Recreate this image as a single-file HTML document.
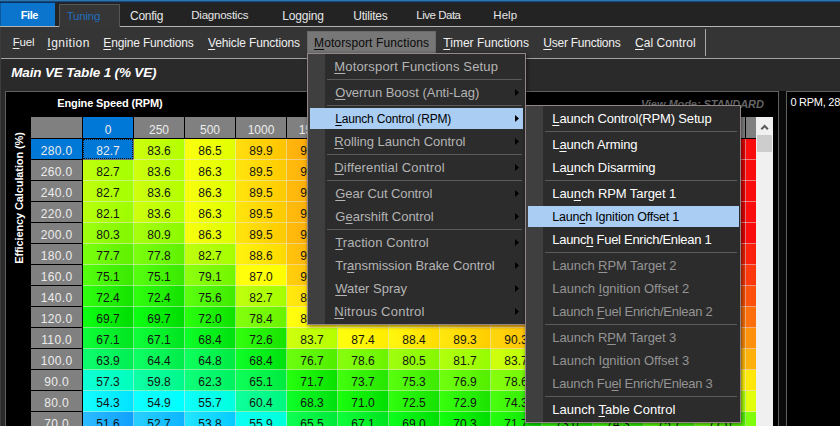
<!DOCTYPE html>
<html><head><meta charset="utf-8"><title>Main VE Table</title><style>
html,body{margin:0;padding:0;background:#2a2a2a;}
body{width:840px;height:426px;overflow:hidden;position:relative;font-family:"Liberation Sans", "DejaVu Sans", sans-serif;}
.r{position:absolute;}
.t{position:absolute;white-space:pre;display:block;}
.t u{text-decoration:underline;text-underline-offset:2px;text-decoration-thickness:1px;}
.c{position:absolute;text-align:center;font-size:12px;color:#141414;white-space:pre;}
.c.h{color:#ececec;}
.menu{position:absolute;box-sizing:border-box;background:#2c2c2c;border:1px solid #948686;box-shadow:1px 1px 4px rgba(0,0,0,0.55);}
</style></head><body>
<div class="r" style="left:0px;top:0px;width:840px;height:426px;background:#2a2a2a;"></div>
<div class="r" style="left:0px;top:0px;width:840px;height:27px;background:#232323;"></div>
<div class="r" style="left:0px;top:0px;width:840px;height:1px;background:#2a76ae;"></div>
<div class="r" style="left:0px;top:1px;width:840px;height:1px;background:#154a7a;"></div>
<div class="r" style="left:0px;top:2px;width:840px;height:1px;background:#1c2732;"></div>
<div class="r" style="left:0px;top:2px;width:56px;height:1px;background:#0a3260;"></div>
<div class="r" style="left:0px;top:27px;width:840px;height:31px;background:#353535;"></div>
<div class="r" style="left:0px;top:26px;width:840px;height:1px;background:#b4b4b4;"></div>
<div class="r" style="left:0px;top:58px;width:840px;height:1px;background:#a2a2a2;"></div>
<div class="r" style="left:1px;top:3px;width:54px;height:23px;background:#0b74cc;"></div>
<div class="r" style="left:59px;top:4px;width:61px;height:23px;background:#363636;border:1px solid #565656;border-bottom:none;box-sizing:border-box;"></div>
<div class="r" style="left:0px;top:3px;width:1px;height:23px;background:#0a5a9c;"></div>
<div class="r" style="left:0px;top:27px;width:1px;height:400px;background:#3c3c3f;"></div>
<span id="file" class="t" style="left:20.70px;top:7.0px;height:17px;line-height:17px;font-size:11px;color:#fff;font-weight:bold;font-style:normal;letter-spacing:-0.411px;">File</span>
<span id="tuning" class="t" style="left:66.70px;top:7.8px;height:17px;line-height:17px;font-size:11.5px;color:#1f6fbe;font-weight:normal;font-style:normal;letter-spacing:-0.208px;">Tuning</span>
<span id="config" class="t" style="left:130.00px;top:7.2px;height:18px;line-height:18px;font-size:12px;color:#e6e6e6;font-weight:normal;font-style:normal;letter-spacing:-0.263px;">Config</span>
<span id="diag" class="t" style="left:191.30px;top:7.4px;height:17px;line-height:17px;font-size:11.5px;color:#e6e6e6;font-weight:normal;font-style:normal;letter-spacing:-0.229px;">Diagnostics</span>
<span id="logging" class="t" style="left:282.30px;top:7.2px;height:18px;line-height:18px;font-size:12px;color:#e6e6e6;font-weight:normal;font-style:normal;letter-spacing:-0.173px;">Logging</span>
<span id="util" class="t" style="left:353.30px;top:7.2px;height:18px;line-height:18px;font-size:12px;color:#e6e6e6;font-weight:normal;font-style:normal;letter-spacing:-0.229px;">Utilites</span>
<span id="live" class="t" style="left:416.30px;top:7.4px;height:17px;line-height:17px;font-size:11.5px;color:#e6e6e6;font-weight:normal;font-style:normal;letter-spacing:-0.486px;">Live Data</span>
<span id="help" class="t" style="left:493.30px;top:7.4px;height:17px;line-height:17px;font-size:11.5px;color:#e6e6e6;font-weight:normal;font-style:normal;letter-spacing:0.048px;">Help</span>
<div class="r" style="left:307px;top:31px;width:129px;height:23px;background:#777777;border:1px solid #6a6a6a;box-sizing:border-box;"></div>
<span id="m_fuel" class="t" style="left:12.70px;top:33.8px;height:17px;line-height:17px;font-size:11.5px;color:#f0f0f0;font-weight:normal;font-style:normal;letter-spacing:-0.172px;"><u>F</u>uel</span>
<span id="m_ign" class="t" style="left:47.30px;top:33.5px;height:18px;line-height:18px;font-size:12px;color:#f0f0f0;font-weight:normal;font-style:normal;letter-spacing:0.483px;"><u>I</u>gnition</span>
<span id="m_eng" class="t" style="left:103.30px;top:33.5px;height:18px;line-height:18px;font-size:12px;color:#f0f0f0;font-weight:normal;font-style:normal;letter-spacing:-0.155px;"><u>E</u>ngine Functions</span>
<span id="m_veh" class="t" style="left:208.00px;top:33.5px;height:18px;line-height:18px;font-size:12px;color:#f0f0f0;font-weight:normal;font-style:normal;letter-spacing:-0.128px;"><u>V</u>ehicle Functions</span>
<span id="m_mot" class="t" style="left:314.00px;top:33.5px;height:18px;line-height:18px;font-size:12px;color:#0a0a0a;font-weight:normal;font-style:normal;letter-spacing:0.120px;"><u>M</u>otorsport Functions</span>
<span id="m_tim" class="t" style="left:443.30px;top:33.5px;height:18px;line-height:18px;font-size:12px;color:#f0f0f0;font-weight:normal;font-style:normal;letter-spacing:0.009px;"><u>T</u>imer Functions</span>
<span id="m_usr" class="t" style="left:543.30px;top:33.5px;height:18px;line-height:18px;font-size:12px;color:#f0f0f0;font-weight:normal;font-style:normal;letter-spacing:-0.253px;"><u>U</u>ser Functions</span>
<span id="m_cal" class="t" style="left:635.00px;top:33.5px;height:18px;line-height:18px;font-size:12px;color:#f0f0f0;font-weight:normal;font-style:normal;letter-spacing:0.064px;"><u>C</u>al Control</span>
<div class="r" style="left:705px;top:29px;width:1px;height:27px;background:#a8a8a8;"></div>
<span id="title" class="t" style="left:11.30px;top:63.0px;height:19px;line-height:19px;font-size:13.5px;color:#fff;font-weight:bold;font-style:italic;letter-spacing:-0.171px;">Main VE Table 1 (% VE)</span>
<div class="r" style="left:5px;top:91px;width:774px;height:340px;background:#000;border:1px solid #606060;box-sizing:border-box;"></div>
<div class="r" style="left:779px;top:91px;width:7px;height:340px;background:#0b0b0b;"></div>
<div class="r" style="left:786px;top:91px;width:60px;height:340px;background:#000;border:1px solid #606060;box-sizing:border-box;"></div>
<span id="rpm" class="t" style="left:790.40px;top:93.8px;height:17px;line-height:17px;font-size:11px;color:#fff;font-weight:normal;font-style:normal;letter-spacing:-0.261px;">0 RPM, 280.0</span>
<span id="espeed" class="t" style="left:57.30px;top:94.5px;height:17px;line-height:17px;font-size:11px;color:#fff;font-weight:bold;font-style:normal;letter-spacing:-0.129px;">Engine Speed (RPM)</span>
<span id="vmode" class="t" style="left:641.00px;top:96.0px;height:17px;line-height:17px;font-size:11px;color:#666666;font-weight:bold;font-style:italic;letter-spacing:-0.062px;">View Mode: STANDARD</span>
<span id="ylab" class="t" style="left:19px;top:198px;height:14px;line-height:14px;font-size:11px;font-weight:bold;color:#fff;transform:translate(-50%,-50%) rotate(-90deg);letter-spacing:-0.110px">Efficiency Calculation (%)</span>
<div id="tbl" style="position:absolute;left:0;top:0;width:757px;height:426px;overflow:hidden">
<div class="r" style="left:31px;top:117px;width:51px;height:21px;background:#808080;"></div>
<div class="r" style="left:83px;top:117px;width:50px;height:21px;background:#0078d7;"></div>
<span class="c h" style="left:83px;top:117px;width:50px;height:21px;line-height:27px">0</span>
<div class="r" style="left:134px;top:117px;width:50px;height:21px;background:#808080;"></div>
<span class="c h" style="left:134px;top:117px;width:50px;height:21px;line-height:27px">250</span>
<div class="r" style="left:185px;top:117px;width:50px;height:21px;background:#808080;"></div>
<span class="c h" style="left:185px;top:117px;width:50px;height:21px;line-height:27px">500</span>
<div class="r" style="left:236px;top:117px;width:50px;height:21px;background:#808080;"></div>
<span class="c h" style="left:236px;top:117px;width:50px;height:21px;line-height:27px">1000</span>
<div class="r" style="left:287px;top:117px;width:50px;height:21px;background:#808080;"></div>
<span class="c h" style="left:287px;top:117px;width:50px;height:21px;line-height:27px">1500</span>
<div class="r" style="left:338px;top:117px;width:50px;height:21px;background:#808080;"></div>
<span class="c h" style="left:338px;top:117px;width:50px;height:21px;line-height:27px">2000</span>
<div class="r" style="left:389px;top:117px;width:50px;height:21px;background:#808080;"></div>
<span class="c h" style="left:389px;top:117px;width:50px;height:21px;line-height:27px">2500</span>
<div class="r" style="left:440px;top:117px;width:50px;height:21px;background:#808080;"></div>
<span class="c h" style="left:440px;top:117px;width:50px;height:21px;line-height:27px">3000</span>
<div class="r" style="left:491px;top:117px;width:50px;height:21px;background:#808080;"></div>
<span class="c h" style="left:491px;top:117px;width:50px;height:21px;line-height:27px">3500</span>
<div class="r" style="left:542px;top:117px;width:50px;height:21px;background:#808080;"></div>
<span class="c h" style="left:542px;top:117px;width:50px;height:21px;line-height:27px">4000</span>
<div class="r" style="left:593px;top:117px;width:50px;height:21px;background:#808080;"></div>
<span class="c h" style="left:593px;top:117px;width:50px;height:21px;line-height:27px">4500</span>
<div class="r" style="left:644px;top:117px;width:50px;height:21px;background:#808080;"></div>
<span class="c h" style="left:644px;top:117px;width:50px;height:21px;line-height:27px">5000</span>
<div class="r" style="left:695px;top:117px;width:50px;height:21px;background:#808080;"></div>
<span class="c h" style="left:695px;top:117px;width:50px;height:21px;line-height:27px">5500</span>
<div class="r" style="left:746px;top:117px;width:50px;height:21px;background:#808080;"></div>
<span class="c h" style="left:746px;top:117px;width:50px;height:21px;line-height:27px">6000</span>
<div class="r" style="left:134px;top:139px;width:51px;height:21px;background:linear-gradient(90deg,#ceff0e,#b2ff00);"></div>
<div class="r" style="left:185px;top:139px;width:51px;height:21px;background:linear-gradient(90deg,#fcff0e,#e0ff00);"></div>
<div class="r" style="left:236px;top:139px;width:51px;height:21px;background:linear-gradient(90deg,#ffdf0e,#ffc300);"></div>
<div class="r" style="left:287px;top:139px;width:51px;height:21px;background:linear-gradient(90deg,#ffb70e,#fd9b00);"></div>
<div class="r" style="left:338px;top:139px;width:51px;height:21px;background:linear-gradient(90deg,#ffa10e,#f88500);"></div>
<div class="r" style="left:389px;top:139px;width:51px;height:21px;background:linear-gradient(90deg,#ff8a0e,#f46e00);"></div>
<div class="r" style="left:440px;top:139px;width:51px;height:21px;background:linear-gradient(90deg,#ff740e,#ef5800);"></div>
<div class="r" style="left:491px;top:139px;width:51px;height:21px;background:linear-gradient(90deg,#ff5e0e,#eb4200);"></div>
<div class="r" style="left:542px;top:139px;width:51px;height:21px;background:linear-gradient(90deg,#ff490e,#e72d00);"></div>
<div class="r" style="left:593px;top:139px;width:51px;height:21px;background:linear-gradient(90deg,#ff330e,#e21700);"></div>
<div class="r" style="left:644px;top:139px;width:51px;height:21px;background:linear-gradient(90deg,#ff1c0e,#de0000);"></div>
<div class="r" style="left:695px;top:139px;width:51px;height:21px;background:linear-gradient(90deg,#ff0e0e,#db0000);"></div>
<div class="r" style="left:746px;top:139px;width:51px;height:21px;background:linear-gradient(90deg,#ff0e0e,#db0000);"></div>
<div class="r" style="left:83px;top:160px;width:51px;height:21px;background:linear-gradient(90deg,#c0ff0e,#a4ff00);"></div>
<div class="r" style="left:134px;top:160px;width:51px;height:21px;background:linear-gradient(90deg,#ceff0e,#b2ff00);"></div>
<div class="r" style="left:185px;top:160px;width:51px;height:21px;background:linear-gradient(90deg,#f9ff0e,#ddff00);"></div>
<div class="r" style="left:236px;top:160px;width:51px;height:21px;background:linear-gradient(90deg,#ffe50e,#ffc900);"></div>
<div class="r" style="left:287px;top:160px;width:51px;height:21px;background:linear-gradient(90deg,#ffbc0e,#fea000);"></div>
<div class="r" style="left:338px;top:160px;width:51px;height:21px;background:linear-gradient(90deg,#ffa50e,#f98900);"></div>
<div class="r" style="left:389px;top:160px;width:51px;height:21px;background:linear-gradient(90deg,#ff8f0e,#f57300);"></div>
<div class="r" style="left:440px;top:160px;width:51px;height:21px;background:linear-gradient(90deg,#ff770e,#f05b00);"></div>
<div class="r" style="left:491px;top:160px;width:51px;height:21px;background:linear-gradient(90deg,#ff610e,#ec4500);"></div>
<div class="r" style="left:542px;top:160px;width:51px;height:21px;background:linear-gradient(90deg,#ff4b0e,#e72f00);"></div>
<div class="r" style="left:593px;top:160px;width:51px;height:21px;background:linear-gradient(90deg,#ff340e,#e31800);"></div>
<div class="r" style="left:644px;top:160px;width:51px;height:21px;background:linear-gradient(90deg,#ff1c0e,#de0000);"></div>
<div class="r" style="left:695px;top:160px;width:51px;height:21px;background:linear-gradient(90deg,#ff0e0e,#db0000);"></div>
<div class="r" style="left:746px;top:160px;width:51px;height:21px;background:linear-gradient(90deg,#ff0e0e,#db0000);"></div>
<div class="r" style="left:83px;top:181px;width:51px;height:21px;background:linear-gradient(90deg,#c0ff0e,#a4ff00);"></div>
<div class="r" style="left:134px;top:181px;width:51px;height:21px;background:linear-gradient(90deg,#ceff0e,#b2ff00);"></div>
<div class="r" style="left:185px;top:181px;width:51px;height:21px;background:linear-gradient(90deg,#f9ff0e,#ddff00);"></div>
<div class="r" style="left:236px;top:181px;width:51px;height:21px;background:linear-gradient(90deg,#ffe50e,#ffc900);"></div>
<div class="r" style="left:287px;top:181px;width:51px;height:21px;background:linear-gradient(90deg,#ffbc0e,#fea000);"></div>
<div class="r" style="left:338px;top:181px;width:51px;height:21px;background:linear-gradient(90deg,#ffa50e,#f98900);"></div>
<div class="r" style="left:389px;top:181px;width:51px;height:21px;background:linear-gradient(90deg,#ff8f0e,#f57300);"></div>
<div class="r" style="left:440px;top:181px;width:51px;height:21px;background:linear-gradient(90deg,#ff770e,#f05b00);"></div>
<div class="r" style="left:491px;top:181px;width:51px;height:21px;background:linear-gradient(90deg,#ff610e,#ec4500);"></div>
<div class="r" style="left:542px;top:181px;width:51px;height:21px;background:linear-gradient(90deg,#ff4b0e,#e72f00);"></div>
<div class="r" style="left:593px;top:181px;width:51px;height:21px;background:linear-gradient(90deg,#ff340e,#e31800);"></div>
<div class="r" style="left:644px;top:181px;width:51px;height:21px;background:linear-gradient(90deg,#ff1c0e,#de0000);"></div>
<div class="r" style="left:695px;top:181px;width:51px;height:21px;background:linear-gradient(90deg,#ff0e0e,#db0000);"></div>
<div class="r" style="left:746px;top:181px;width:51px;height:21px;background:linear-gradient(90deg,#ff0e0e,#db0000);"></div>
<div class="r" style="left:83px;top:202px;width:51px;height:21px;background:linear-gradient(90deg,#b8ff0e,#9cfd00);"></div>
<div class="r" style="left:134px;top:202px;width:51px;height:21px;background:linear-gradient(90deg,#ceff0e,#b2ff00);"></div>
<div class="r" style="left:185px;top:202px;width:51px;height:21px;background:linear-gradient(90deg,#f9ff0e,#ddff00);"></div>
<div class="r" style="left:236px;top:202px;width:51px;height:21px;background:linear-gradient(90deg,#ffe50e,#ffc900);"></div>
<div class="r" style="left:287px;top:202px;width:51px;height:21px;background:linear-gradient(90deg,#ffbc0e,#fea000);"></div>
<div class="r" style="left:338px;top:202px;width:51px;height:21px;background:linear-gradient(90deg,#ffa50e,#f98900);"></div>
<div class="r" style="left:389px;top:202px;width:51px;height:21px;background:linear-gradient(90deg,#ff8f0e,#f57300);"></div>
<div class="r" style="left:440px;top:202px;width:51px;height:21px;background:linear-gradient(90deg,#ff790e,#f05d00);"></div>
<div class="r" style="left:491px;top:202px;width:51px;height:21px;background:linear-gradient(90deg,#ff620e,#ec4600);"></div>
<div class="r" style="left:542px;top:202px;width:51px;height:21px;background:linear-gradient(90deg,#ff4e0e,#e83200);"></div>
<div class="r" style="left:593px;top:202px;width:51px;height:21px;background:linear-gradient(90deg,#ff370e,#e31b00);"></div>
<div class="r" style="left:644px;top:202px;width:51px;height:21px;background:linear-gradient(90deg,#ff210e,#df0500);"></div>
<div class="r" style="left:695px;top:202px;width:51px;height:21px;background:linear-gradient(90deg,#ff0e0e,#db0000);"></div>
<div class="r" style="left:746px;top:202px;width:51px;height:21px;background:linear-gradient(90deg,#ff0e0e,#db0000);"></div>
<div class="r" style="left:83px;top:223px;width:51px;height:21px;background:linear-gradient(90deg,#9eff0e,#82f800);"></div>
<div class="r" style="left:134px;top:223px;width:51px;height:21px;background:linear-gradient(90deg,#a7ff0e,#8bfa00);"></div>
<div class="r" style="left:185px;top:223px;width:51px;height:21px;background:linear-gradient(90deg,#f9ff0e,#ddff00);"></div>
<div class="r" style="left:236px;top:223px;width:51px;height:21px;background:linear-gradient(90deg,#ffe50e,#ffc900);"></div>
<div class="r" style="left:287px;top:223px;width:51px;height:21px;background:linear-gradient(90deg,#ffbc0e,#fea000);"></div>
<div class="r" style="left:338px;top:223px;width:51px;height:21px;background:linear-gradient(90deg,#ffa70e,#fa8b00);"></div>
<div class="r" style="left:389px;top:223px;width:51px;height:21px;background:linear-gradient(90deg,#ff940e,#f67800);"></div>
<div class="r" style="left:440px;top:223px;width:51px;height:21px;background:linear-gradient(90deg,#ff7f0e,#f26300);"></div>
<div class="r" style="left:491px;top:223px;width:51px;height:21px;background:linear-gradient(90deg,#ff6c0e,#ee5000);"></div>
<div class="r" style="left:542px;top:223px;width:51px;height:21px;background:linear-gradient(90deg,#ff570e,#ea3b00);"></div>
<div class="r" style="left:593px;top:223px;width:51px;height:21px;background:linear-gradient(90deg,#ff440e,#e62800);"></div>
<div class="r" style="left:644px;top:223px;width:51px;height:21px;background:linear-gradient(90deg,#ff2f0e,#e21300);"></div>
<div class="r" style="left:695px;top:223px;width:51px;height:21px;background:linear-gradient(90deg,#ff1c0e,#de0000);"></div>
<div class="r" style="left:746px;top:223px;width:51px;height:21px;background:linear-gradient(90deg,#ff0e0e,#db0000);"></div>
<div class="r" style="left:83px;top:244px;width:51px;height:21px;background:linear-gradient(90deg,#7aff0e,#5ef100);"></div>
<div class="r" style="left:134px;top:244px;width:51px;height:21px;background:linear-gradient(90deg,#7bff0e,#5ff100);"></div>
<div class="r" style="left:185px;top:244px;width:51px;height:21px;background:linear-gradient(90deg,#c0ff0e,#a4ff00);"></div>
<div class="r" style="left:236px;top:244px;width:51px;height:21px;background:linear-gradient(90deg,#fff40e,#ffd800);"></div>
<div class="r" style="left:287px;top:244px;width:51px;height:21px;background:linear-gradient(90deg,#ffc40e,#ffa800);"></div>
<div class="r" style="left:338px;top:244px;width:51px;height:21px;background:linear-gradient(90deg,#ffb20e,#fc9600);"></div>
<div class="r" style="left:389px;top:244px;width:51px;height:21px;background:linear-gradient(90deg,#ffa10e,#f88500);"></div>
<div class="r" style="left:440px;top:244px;width:51px;height:21px;background:linear-gradient(90deg,#ff8f0e,#f57300);"></div>
<div class="r" style="left:491px;top:244px;width:51px;height:21px;background:linear-gradient(90deg,#ff7e0e,#f16200);"></div>
<div class="r" style="left:542px;top:244px;width:51px;height:21px;background:linear-gradient(90deg,#ff6a0e,#ed4e00);"></div>
<div class="r" style="left:593px;top:244px;width:51px;height:21px;background:linear-gradient(90deg,#ff590e,#ea3d00);"></div>
<div class="r" style="left:644px;top:244px;width:51px;height:21px;background:linear-gradient(90deg,#ff470e,#e62b00);"></div>
<div class="r" style="left:695px;top:244px;width:51px;height:21px;background:linear-gradient(90deg,#ff360e,#e31a00);"></div>
<div class="r" style="left:746px;top:244px;width:51px;height:21px;background:linear-gradient(90deg,#ff240e,#df0800);"></div>
<div class="r" style="left:83px;top:265px;width:51px;height:21px;background:linear-gradient(90deg,#55ff0e,#39e900);"></div>
<div class="r" style="left:134px;top:265px;width:51px;height:21px;background:linear-gradient(90deg,#55ff0e,#39e900);"></div>
<div class="r" style="left:185px;top:265px;width:51px;height:21px;background:linear-gradient(90deg,#8eff0e,#72f500);"></div>
<div class="r" style="left:236px;top:265px;width:51px;height:21px;background:linear-gradient(90deg,#ffff0e,#ffff00);"></div>
<div class="r" style="left:287px;top:265px;width:51px;height:21px;background:linear-gradient(90deg,#ffd00e,#ffb400);"></div>
<div class="r" style="left:338px;top:265px;width:51px;height:21px;background:linear-gradient(90deg,#ffc10e,#ffa500);"></div>
<div class="r" style="left:389px;top:265px;width:51px;height:21px;background:linear-gradient(90deg,#ffaf0e,#fb9300);"></div>
<div class="r" style="left:440px;top:265px;width:51px;height:21px;background:linear-gradient(90deg,#ff9f0e,#f88300);"></div>
<div class="r" style="left:491px;top:265px;width:51px;height:21px;background:linear-gradient(90deg,#ff8e0e,#f47200);"></div>
<div class="r" style="left:542px;top:265px;width:51px;height:21px;background:linear-gradient(90deg,#ff7e0e,#f16200);"></div>
<div class="r" style="left:593px;top:265px;width:51px;height:21px;background:linear-gradient(90deg,#ff6c0e,#ee5000);"></div>
<div class="r" style="left:644px;top:265px;width:51px;height:21px;background:linear-gradient(90deg,#ff5c0e,#eb4000);"></div>
<div class="r" style="left:695px;top:265px;width:51px;height:21px;background:linear-gradient(90deg,#ff4b0e,#e72f00);"></div>
<div class="r" style="left:746px;top:265px;width:51px;height:21px;background:linear-gradient(90deg,#ff3b0e,#e41f00);"></div>
<div class="r" style="left:83px;top:286px;width:51px;height:21px;background:linear-gradient(90deg,#30ff0e,#14e200);"></div>
<div class="r" style="left:134px;top:286px;width:51px;height:21px;background:linear-gradient(90deg,#30ff0e,#14e200);"></div>
<div class="r" style="left:185px;top:286px;width:51px;height:21px;background:linear-gradient(90deg,#5cff0e,#40eb00);"></div>
<div class="r" style="left:236px;top:286px;width:51px;height:21px;background:linear-gradient(90deg,#c0ff0e,#a4ff00);"></div>
<div class="r" style="left:287px;top:286px;width:51px;height:21px;background:linear-gradient(90deg,#ffea0e,#ffce00);"></div>
<div class="r" style="left:338px;top:286px;width:51px;height:21px;background:linear-gradient(90deg,#ffda0e,#ffbe00);"></div>
<div class="r" style="left:389px;top:286px;width:51px;height:21px;background:linear-gradient(90deg,#ffc80e,#ffac00);"></div>
<div class="r" style="left:440px;top:286px;width:51px;height:21px;background:linear-gradient(90deg,#ffb90e,#fd9d00);"></div>
<div class="r" style="left:491px;top:286px;width:51px;height:21px;background:linear-gradient(90deg,#ffa70e,#fa8b00);"></div>
<div class="r" style="left:542px;top:286px;width:51px;height:21px;background:linear-gradient(90deg,#ff970e,#f67b00);"></div>
<div class="r" style="left:593px;top:286px;width:51px;height:21px;background:linear-gradient(90deg,#ff860e,#f36a00);"></div>
<div class="r" style="left:644px;top:286px;width:51px;height:21px;background:linear-gradient(90deg,#ff760e,#f05a00);"></div>
<div class="r" style="left:695px;top:286px;width:51px;height:21px;background:linear-gradient(90deg,#ff640e,#ec4800);"></div>
<div class="r" style="left:746px;top:286px;width:51px;height:21px;background:linear-gradient(90deg,#ff540e,#e93800);"></div>
<div class="r" style="left:83px;top:307px;width:51px;height:21px;background:linear-gradient(90deg,#0eff13,#00dc00);"></div>
<div class="r" style="left:134px;top:307px;width:51px;height:21px;background:linear-gradient(90deg,#0eff13,#00dc00);"></div>
<div class="r" style="left:185px;top:307px;width:51px;height:21px;background:linear-gradient(90deg,#2aff0e,#0ee100);"></div>
<div class="r" style="left:236px;top:307px;width:51px;height:21px;background:linear-gradient(90deg,#84ff0e,#68f300);"></div>
<div class="r" style="left:287px;top:307px;width:51px;height:21px;background:linear-gradient(90deg,#ffff0e,#ffef00);"></div>
<div class="r" style="left:338px;top:307px;width:51px;height:21px;background:linear-gradient(90deg,#fffa0e,#ffde00);"></div>
<div class="r" style="left:389px;top:307px;width:51px;height:21px;background:linear-gradient(90deg,#ffea0e,#ffce00);"></div>
<div class="r" style="left:440px;top:307px;width:51px;height:21px;background:linear-gradient(90deg,#ffd80e,#ffbc00);"></div>
<div class="r" style="left:491px;top:307px;width:51px;height:21px;background:linear-gradient(90deg,#ffc70e,#ffab00);"></div>
<div class="r" style="left:542px;top:307px;width:51px;height:21px;background:linear-gradient(90deg,#ffb70e,#fd9b00);"></div>
<div class="r" style="left:593px;top:307px;width:51px;height:21px;background:linear-gradient(90deg,#ffa50e,#f98900);"></div>
<div class="r" style="left:644px;top:307px;width:51px;height:21px;background:linear-gradient(90deg,#ff940e,#f67800);"></div>
<div class="r" style="left:695px;top:307px;width:51px;height:21px;background:linear-gradient(90deg,#ff840e,#f36800);"></div>
<div class="r" style="left:746px;top:307px;width:51px;height:21px;background:linear-gradient(90deg,#ff720e,#ef5600);"></div>
<div class="r" style="left:83px;top:328px;width:51px;height:21px;background:linear-gradient(90deg,#0eff3a,#00e41e);"></div>
<div class="r" style="left:134px;top:328px;width:51px;height:21px;background:linear-gradient(90deg,#0eff3a,#00e41e);"></div>
<div class="r" style="left:185px;top:328px;width:51px;height:21px;background:linear-gradient(90deg,#0eff28,#00e00c);"></div>
<div class="r" style="left:236px;top:328px;width:51px;height:21px;background:linear-gradient(90deg,#32ff0e,#16e200);"></div>
<div class="r" style="left:287px;top:328px;width:51px;height:21px;background:linear-gradient(90deg,#d0ff0e,#b4ff00);"></div>
<div class="r" style="left:338px;top:328px;width:51px;height:21px;background:linear-gradient(90deg,#ffff0e,#ffeb00);"></div>
<div class="r" style="left:389px;top:328px;width:51px;height:21px;background:linear-gradient(90deg,#fff70e,#ffdb00);"></div>
<div class="r" style="left:440px;top:328px;width:51px;height:21px;background:linear-gradient(90deg,#ffe80e,#ffcc00);"></div>
<div class="r" style="left:491px;top:328px;width:51px;height:21px;background:linear-gradient(90deg,#ffd80e,#ffbc00);"></div>
<div class="r" style="left:542px;top:328px;width:51px;height:21px;background:linear-gradient(90deg,#ffca0e,#ffae00);"></div>
<div class="r" style="left:593px;top:328px;width:51px;height:21px;background:linear-gradient(90deg,#ffbd0e,#fea100);"></div>
<div class="r" style="left:644px;top:328px;width:51px;height:21px;background:linear-gradient(90deg,#ffaf0e,#fb9300);"></div>
<div class="r" style="left:695px;top:328px;width:51px;height:21px;background:linear-gradient(90deg,#ffa20e,#f98600);"></div>
<div class="r" style="left:746px;top:328px;width:51px;height:21px;background:linear-gradient(90deg,#ff940e,#f67800);"></div>
<div class="r" style="left:83px;top:349px;width:51px;height:21px;background:linear-gradient(90deg,#0eff6e,#00ee52);"></div>
<div class="r" style="left:134px;top:349px;width:51px;height:21px;background:linear-gradient(90deg,#0eff65,#00ec49);"></div>
<div class="r" style="left:185px;top:349px;width:51px;height:21px;background:linear-gradient(90deg,#0eff5e,#00eb42);"></div>
<div class="r" style="left:236px;top:349px;width:51px;height:21px;background:linear-gradient(90deg,#0eff28,#00e00c);"></div>
<div class="r" style="left:287px;top:349px;width:51px;height:21px;background:linear-gradient(90deg,#6cff0e,#50ee00);"></div>
<div class="r" style="left:338px;top:349px;width:51px;height:21px;background:linear-gradient(90deg,#87ff0e,#6bf300);"></div>
<div class="r" style="left:389px;top:349px;width:51px;height:21px;background:linear-gradient(90deg,#a1ff0e,#85f800);"></div>
<div class="r" style="left:440px;top:349px;width:51px;height:21px;background:linear-gradient(90deg,#b2ff0e,#96fc00);"></div>
<div class="r" style="left:491px;top:349px;width:51px;height:21px;background:linear-gradient(90deg,#d0ff0e,#b4ff00);"></div>
<div class="r" style="left:542px;top:349px;width:51px;height:21px;background:linear-gradient(90deg,#ecff0e,#d0ff00);"></div>
<div class="r" style="left:593px;top:349px;width:51px;height:21px;background:linear-gradient(90deg,#ffff0e,#ffec00);"></div>
<div class="r" style="left:644px;top:349px;width:51px;height:21px;background:linear-gradient(90deg,#ffed0e,#ffd100);"></div>
<div class="r" style="left:695px;top:349px;width:51px;height:21px;background:linear-gradient(90deg,#ffd00e,#ffb400);"></div>
<div class="r" style="left:746px;top:349px;width:51px;height:21px;background:linear-gradient(90deg,#ffb40e,#fc9800);"></div>
<div class="r" style="left:83px;top:370px;width:51px;height:21px;background:linear-gradient(90deg,#0effd6,#00ffba);"></div>
<div class="r" style="left:134px;top:370px;width:51px;height:21px;background:linear-gradient(90deg,#0effa6,#00f98a);"></div>
<div class="r" style="left:185px;top:370px;width:51px;height:21px;background:linear-gradient(90deg,#0eff7a,#00f15e);"></div>
<div class="r" style="left:236px;top:370px;width:51px;height:21px;background:linear-gradient(90deg,#0eff59,#00ea3d);"></div>
<div class="r" style="left:287px;top:370px;width:51px;height:21px;background:linear-gradient(90deg,#26ff0e,#0ae000);"></div>
<div class="r" style="left:338px;top:370px;width:51px;height:21px;background:linear-gradient(90deg,#42ff0e,#26e500);"></div>
<div class="r" style="left:389px;top:370px;width:51px;height:21px;background:linear-gradient(90deg,#58ff0e,#3cea00);"></div>
<div class="r" style="left:440px;top:370px;width:51px;height:21px;background:linear-gradient(90deg,#6fff0e,#53ee00);"></div>
<div class="r" style="left:491px;top:370px;width:51px;height:21px;background:linear-gradient(90deg,#87ff0e,#6bf300);"></div>
<div class="r" style="left:542px;top:370px;width:51px;height:21px;background:linear-gradient(90deg,#a4ff0e,#88f900);"></div>
<div class="r" style="left:593px;top:370px;width:51px;height:21px;background:linear-gradient(90deg,#c2ff0e,#a6ff00);"></div>
<div class="r" style="left:644px;top:370px;width:51px;height:21px;background:linear-gradient(90deg,#e4ff0e,#c8ff00);"></div>
<div class="r" style="left:695px;top:370px;width:51px;height:21px;background:linear-gradient(90deg,#ffff0e,#ffef00);"></div>
<div class="r" style="left:746px;top:370px;width:51px;height:21px;background:linear-gradient(90deg,#ffea0e,#ffce00);"></div>
<div class="r" style="left:83px;top:391px;width:51px;height:21px;background:linear-gradient(90deg,#14feff,#00e2ff);"></div>
<div class="r" style="left:134px;top:391px;width:51px;height:21px;background:linear-gradient(90deg,#0effff,#00ffff);"></div>
<div class="r" style="left:185px;top:391px;width:51px;height:21px;background:linear-gradient(90deg,#0efffa,#00ffde);"></div>
<div class="r" style="left:236px;top:391px;width:51px;height:21px;background:linear-gradient(90deg,#0eff9b,#00f77f);"></div>
<div class="r" style="left:287px;top:391px;width:51px;height:21px;background:linear-gradient(90deg,#0eff29,#00e00d);"></div>
<div class="r" style="left:338px;top:391px;width:51px;height:21px;background:linear-gradient(90deg,#1cff0e,#00de00);"></div>
<div class="r" style="left:389px;top:391px;width:51px;height:21px;background:linear-gradient(90deg,#31ff0e,#15e200);"></div>
<div class="r" style="left:440px;top:391px;width:51px;height:21px;background:linear-gradient(90deg,#37ff0e,#1be300);"></div>
<div class="r" style="left:491px;top:391px;width:51px;height:21px;background:linear-gradient(90deg,#4aff0e,#2ee700);"></div>
<div class="r" style="left:542px;top:391px;width:51px;height:21px;background:linear-gradient(90deg,#69ff0e,#4ded00);"></div>
<div class="r" style="left:593px;top:391px;width:51px;height:21px;background:linear-gradient(90deg,#87ff0e,#6bf300);"></div>
<div class="r" style="left:644px;top:391px;width:51px;height:21px;background:linear-gradient(90deg,#a5ff0e,#89f900);"></div>
<div class="r" style="left:695px;top:391px;width:51px;height:21px;background:linear-gradient(90deg,#c3ff0e,#a7ff00);"></div>
<div class="r" style="left:746px;top:391px;width:51px;height:21px;background:linear-gradient(90deg,#e6ff0e,#caff00);"></div>
<div class="r" style="left:83px;top:412px;width:51px;height:21px;background:linear-gradient(90deg,#2cbcff,#10a0fe);"></div>
<div class="r" style="left:134px;top:412px;width:51px;height:21px;background:linear-gradient(90deg,#28d0ff,#0cb4ff);"></div>
<div class="r" style="left:185px;top:412px;width:51px;height:21px;background:linear-gradient(90deg,#22e6ff,#06caff);"></div>
<div class="r" style="left:236px;top:412px;width:51px;height:21px;background:linear-gradient(90deg,#0efff6,#00ffda);"></div>
<div class="r" style="left:287px;top:412px;width:51px;height:21px;background:linear-gradient(90deg,#0eff53,#00e937);"></div>
<div class="r" style="left:338px;top:412px;width:51px;height:21px;background:linear-gradient(90deg,#0eff3a,#00e41e);"></div>
<div class="r" style="left:389px;top:412px;width:51px;height:21px;background:linear-gradient(90deg,#0eff1e,#00de02);"></div>
<div class="r" style="left:440px;top:412px;width:51px;height:21px;background:linear-gradient(90deg,#12ff0e,#00dc00);"></div>
<div class="r" style="left:491px;top:412px;width:51px;height:21px;background:linear-gradient(90deg,#26ff0e,#0ae000);"></div>
<div class="r" style="left:542px;top:412px;width:51px;height:21px;background:linear-gradient(90deg,#38ff0e,#1ce300);"></div>
<div class="r" style="left:593px;top:412px;width:51px;height:21px;background:linear-gradient(90deg,#4aff0e,#2ee700);"></div>
<div class="r" style="left:644px;top:412px;width:51px;height:21px;background:linear-gradient(90deg,#5eff0e,#42eb00);"></div>
<div class="r" style="left:695px;top:412px;width:51px;height:21px;background:linear-gradient(90deg,#70ff0e,#54ef00);"></div>
<div class="r" style="left:746px;top:412px;width:51px;height:21px;background:linear-gradient(90deg,#82ff0e,#66f200);"></div>
<div class="r" style="left:83px;top:139px;width:714px;height:294px;background:linear-gradient(to right,transparent 50px,rgba(232,232,232,0.5) 50px) 0 0/51px 100%,linear-gradient(to bottom,transparent 20px,rgba(232,232,232,0.5) 20px) 0 0/100% 21px;"></div>
<div class="r" style="left:31px;top:139px;width:51px;height:20px;background:#0078d7;"></div>
<span class="c h" style="left:31px;top:139px;width:51px;height:20px;line-height:24px;letter-spacing:0.35px;text-indent:0.35px">280.0</span>
<div class="r" style="left:83px;top:139px;width:50px;height:20px;background:#0078d7;outline:1px dotted #111;outline-offset:-1px;"></div>
<span class="c h" style="left:83px;top:139px;width:50px;height:20px;line-height:24px">82.7</span>
<span class="c" style="left:134px;top:139px;width:50px;height:20px;line-height:24px">83.6</span>
<span class="c" style="left:185px;top:139px;width:50px;height:20px;line-height:24px">86.5</span>
<span class="c" style="left:236px;top:139px;width:50px;height:20px;line-height:24px">89.9</span>
<span class="c" style="left:287px;top:139px;width:50px;height:20px;line-height:24px">92.4</span>
<span class="c" style="left:338px;top:139px;width:50px;height:20px;line-height:24px">93.8</span>
<span class="c" style="left:389px;top:139px;width:50px;height:20px;line-height:24px">95.2</span>
<span class="c" style="left:440px;top:139px;width:50px;height:20px;line-height:24px">96.6</span>
<span class="c" style="left:491px;top:139px;width:50px;height:20px;line-height:24px">98.0</span>
<span class="c" style="left:542px;top:139px;width:50px;height:20px;line-height:24px">99.3</span>
<span class="c" style="left:593px;top:139px;width:50px;height:20px;line-height:24px">100.7</span>
<span class="c" style="left:644px;top:139px;width:50px;height:20px;line-height:24px">102.1</span>
<span class="c" style="left:695px;top:139px;width:50px;height:20px;line-height:24px">103.5</span>
<span class="c" style="left:746px;top:139px;width:50px;height:20px;line-height:24px">104.9</span>
<div class="r" style="left:31px;top:160px;width:51px;height:20px;background:#808080;"></div>
<span class="c h" style="left:31px;top:160px;width:51px;height:20px;line-height:24px;letter-spacing:0.35px;text-indent:0.35px">260.0</span>
<span class="c" style="left:83px;top:160px;width:50px;height:20px;line-height:24px">82.7</span>
<span class="c" style="left:134px;top:160px;width:50px;height:20px;line-height:24px">83.6</span>
<span class="c" style="left:185px;top:160px;width:50px;height:20px;line-height:24px">86.3</span>
<span class="c" style="left:236px;top:160px;width:50px;height:20px;line-height:24px">89.5</span>
<span class="c" style="left:287px;top:160px;width:50px;height:20px;line-height:24px">92.1</span>
<span class="c" style="left:338px;top:160px;width:50px;height:20px;line-height:24px">93.5</span>
<span class="c" style="left:389px;top:160px;width:50px;height:20px;line-height:24px">94.9</span>
<span class="c" style="left:440px;top:160px;width:50px;height:20px;line-height:24px">96.4</span>
<span class="c" style="left:491px;top:160px;width:50px;height:20px;line-height:24px">97.8</span>
<span class="c" style="left:542px;top:160px;width:50px;height:20px;line-height:24px">99.2</span>
<span class="c" style="left:593px;top:160px;width:50px;height:20px;line-height:24px">100.6</span>
<span class="c" style="left:644px;top:160px;width:50px;height:20px;line-height:24px">102.1</span>
<span class="c" style="left:695px;top:160px;width:50px;height:20px;line-height:24px">103.5</span>
<span class="c" style="left:746px;top:160px;width:50px;height:20px;line-height:24px">104.9</span>
<div class="r" style="left:31px;top:181px;width:51px;height:20px;background:#808080;"></div>
<span class="c h" style="left:31px;top:181px;width:51px;height:20px;line-height:24px;letter-spacing:0.35px;text-indent:0.35px">240.0</span>
<span class="c" style="left:83px;top:181px;width:50px;height:20px;line-height:24px">82.7</span>
<span class="c" style="left:134px;top:181px;width:50px;height:20px;line-height:24px">83.6</span>
<span class="c" style="left:185px;top:181px;width:50px;height:20px;line-height:24px">86.3</span>
<span class="c" style="left:236px;top:181px;width:50px;height:20px;line-height:24px">89.5</span>
<span class="c" style="left:287px;top:181px;width:50px;height:20px;line-height:24px">92.1</span>
<span class="c" style="left:338px;top:181px;width:50px;height:20px;line-height:24px">93.5</span>
<span class="c" style="left:389px;top:181px;width:50px;height:20px;line-height:24px">94.9</span>
<span class="c" style="left:440px;top:181px;width:50px;height:20px;line-height:24px">96.4</span>
<span class="c" style="left:491px;top:181px;width:50px;height:20px;line-height:24px">97.8</span>
<span class="c" style="left:542px;top:181px;width:50px;height:20px;line-height:24px">99.2</span>
<span class="c" style="left:593px;top:181px;width:50px;height:20px;line-height:24px">100.6</span>
<span class="c" style="left:644px;top:181px;width:50px;height:20px;line-height:24px">102.1</span>
<span class="c" style="left:695px;top:181px;width:50px;height:20px;line-height:24px">103.5</span>
<span class="c" style="left:746px;top:181px;width:50px;height:20px;line-height:24px">104.9</span>
<div class="r" style="left:31px;top:202px;width:51px;height:20px;background:#808080;"></div>
<span class="c h" style="left:31px;top:202px;width:51px;height:20px;line-height:24px;letter-spacing:0.35px;text-indent:0.35px">220.0</span>
<span class="c" style="left:83px;top:202px;width:50px;height:20px;line-height:24px">82.1</span>
<span class="c" style="left:134px;top:202px;width:50px;height:20px;line-height:24px">83.6</span>
<span class="c" style="left:185px;top:202px;width:50px;height:20px;line-height:24px">86.3</span>
<span class="c" style="left:236px;top:202px;width:50px;height:20px;line-height:24px">89.5</span>
<span class="c" style="left:287px;top:202px;width:50px;height:20px;line-height:24px">92.1</span>
<span class="c" style="left:338px;top:202px;width:50px;height:20px;line-height:24px">93.5</span>
<span class="c" style="left:389px;top:202px;width:50px;height:20px;line-height:24px">94.9</span>
<span class="c" style="left:440px;top:202px;width:50px;height:20px;line-height:24px">96.3</span>
<span class="c" style="left:491px;top:202px;width:50px;height:20px;line-height:24px">97.7</span>
<span class="c" style="left:542px;top:202px;width:50px;height:20px;line-height:24px">99.0</span>
<span class="c" style="left:593px;top:202px;width:50px;height:20px;line-height:24px">100.4</span>
<span class="c" style="left:644px;top:202px;width:50px;height:20px;line-height:24px">101.8</span>
<span class="c" style="left:695px;top:202px;width:50px;height:20px;line-height:24px">103.2</span>
<span class="c" style="left:746px;top:202px;width:50px;height:20px;line-height:24px">104.6</span>
<div class="r" style="left:31px;top:223px;width:51px;height:20px;background:#808080;"></div>
<span class="c h" style="left:31px;top:223px;width:51px;height:20px;line-height:24px;letter-spacing:0.35px;text-indent:0.35px">200.0</span>
<span class="c" style="left:83px;top:223px;width:50px;height:20px;line-height:24px">80.3</span>
<span class="c" style="left:134px;top:223px;width:50px;height:20px;line-height:24px">80.9</span>
<span class="c" style="left:185px;top:223px;width:50px;height:20px;line-height:24px">86.3</span>
<span class="c" style="left:236px;top:223px;width:50px;height:20px;line-height:24px">89.5</span>
<span class="c" style="left:287px;top:223px;width:50px;height:20px;line-height:24px">92.1</span>
<span class="c" style="left:338px;top:223px;width:50px;height:20px;line-height:24px">93.4</span>
<span class="c" style="left:389px;top:223px;width:50px;height:20px;line-height:24px">94.6</span>
<span class="c" style="left:440px;top:223px;width:50px;height:20px;line-height:24px">95.9</span>
<span class="c" style="left:491px;top:223px;width:50px;height:20px;line-height:24px">97.1</span>
<span class="c" style="left:542px;top:223px;width:50px;height:20px;line-height:24px">98.4</span>
<span class="c" style="left:593px;top:223px;width:50px;height:20px;line-height:24px">99.6</span>
<span class="c" style="left:644px;top:223px;width:50px;height:20px;line-height:24px">100.9</span>
<span class="c" style="left:695px;top:223px;width:50px;height:20px;line-height:24px">102.1</span>
<span class="c" style="left:746px;top:223px;width:50px;height:20px;line-height:24px">103.4</span>
<div class="r" style="left:31px;top:244px;width:51px;height:20px;background:#808080;"></div>
<span class="c h" style="left:31px;top:244px;width:51px;height:20px;line-height:24px;letter-spacing:0.35px;text-indent:0.35px">180.0</span>
<span class="c" style="left:83px;top:244px;width:50px;height:20px;line-height:24px">77.7</span>
<span class="c" style="left:134px;top:244px;width:50px;height:20px;line-height:24px">77.8</span>
<span class="c" style="left:185px;top:244px;width:50px;height:20px;line-height:24px">82.7</span>
<span class="c" style="left:236px;top:244px;width:50px;height:20px;line-height:24px">88.6</span>
<span class="c" style="left:287px;top:244px;width:50px;height:20px;line-height:24px">91.6</span>
<span class="c" style="left:338px;top:244px;width:50px;height:20px;line-height:24px">92.7</span>
<span class="c" style="left:389px;top:244px;width:50px;height:20px;line-height:24px">93.8</span>
<span class="c" style="left:440px;top:244px;width:50px;height:20px;line-height:24px">94.9</span>
<span class="c" style="left:491px;top:244px;width:50px;height:20px;line-height:24px">96.0</span>
<span class="c" style="left:542px;top:244px;width:50px;height:20px;line-height:24px">97.2</span>
<span class="c" style="left:593px;top:244px;width:50px;height:20px;line-height:24px">98.3</span>
<span class="c" style="left:644px;top:244px;width:50px;height:20px;line-height:24px">99.4</span>
<span class="c" style="left:695px;top:244px;width:50px;height:20px;line-height:24px">100.5</span>
<span class="c" style="left:746px;top:244px;width:50px;height:20px;line-height:24px">101.6</span>
<div class="r" style="left:31px;top:265px;width:51px;height:20px;background:#808080;"></div>
<span class="c h" style="left:31px;top:265px;width:51px;height:20px;line-height:24px;letter-spacing:0.35px;text-indent:0.35px">160.0</span>
<span class="c" style="left:83px;top:265px;width:50px;height:20px;line-height:24px">75.1</span>
<span class="c" style="left:134px;top:265px;width:50px;height:20px;line-height:24px">75.1</span>
<span class="c" style="left:185px;top:265px;width:50px;height:20px;line-height:24px">79.1</span>
<span class="c" style="left:236px;top:265px;width:50px;height:20px;line-height:24px">87.0</span>
<span class="c" style="left:287px;top:265px;width:50px;height:20px;line-height:24px">90.8</span>
<span class="c" style="left:338px;top:265px;width:50px;height:20px;line-height:24px">91.8</span>
<span class="c" style="left:389px;top:265px;width:50px;height:20px;line-height:24px">92.9</span>
<span class="c" style="left:440px;top:265px;width:50px;height:20px;line-height:24px">93.9</span>
<span class="c" style="left:491px;top:265px;width:50px;height:20px;line-height:24px">95.0</span>
<span class="c" style="left:542px;top:265px;width:50px;height:20px;line-height:24px">96.0</span>
<span class="c" style="left:593px;top:265px;width:50px;height:20px;line-height:24px">97.1</span>
<span class="c" style="left:644px;top:265px;width:50px;height:20px;line-height:24px">98.1</span>
<span class="c" style="left:695px;top:265px;width:50px;height:20px;line-height:24px">99.2</span>
<span class="c" style="left:746px;top:265px;width:50px;height:20px;line-height:24px">100.2</span>
<div class="r" style="left:31px;top:286px;width:51px;height:20px;background:#808080;"></div>
<span class="c h" style="left:31px;top:286px;width:51px;height:20px;line-height:24px;letter-spacing:0.35px;text-indent:0.35px">140.0</span>
<span class="c" style="left:83px;top:286px;width:50px;height:20px;line-height:24px">72.4</span>
<span class="c" style="left:134px;top:286px;width:50px;height:20px;line-height:24px">72.4</span>
<span class="c" style="left:185px;top:286px;width:50px;height:20px;line-height:24px">75.6</span>
<span class="c" style="left:236px;top:286px;width:50px;height:20px;line-height:24px">82.7</span>
<span class="c" style="left:287px;top:286px;width:50px;height:20px;line-height:24px">89.2</span>
<span class="c" style="left:338px;top:286px;width:50px;height:20px;line-height:24px">90.2</span>
<span class="c" style="left:389px;top:286px;width:50px;height:20px;line-height:24px">91.3</span>
<span class="c" style="left:440px;top:286px;width:50px;height:20px;line-height:24px">92.3</span>
<span class="c" style="left:491px;top:286px;width:50px;height:20px;line-height:24px">93.4</span>
<span class="c" style="left:542px;top:286px;width:50px;height:20px;line-height:24px">94.4</span>
<span class="c" style="left:593px;top:286px;width:50px;height:20px;line-height:24px">95.5</span>
<span class="c" style="left:644px;top:286px;width:50px;height:20px;line-height:24px">96.5</span>
<span class="c" style="left:695px;top:286px;width:50px;height:20px;line-height:24px">97.6</span>
<span class="c" style="left:746px;top:286px;width:50px;height:20px;line-height:24px">98.6</span>
<div class="r" style="left:31px;top:307px;width:51px;height:20px;background:#808080;"></div>
<span class="c h" style="left:31px;top:307px;width:51px;height:20px;line-height:24px;letter-spacing:0.35px;text-indent:0.35px">120.0</span>
<span class="c" style="left:83px;top:307px;width:50px;height:20px;line-height:24px">69.7</span>
<span class="c" style="left:134px;top:307px;width:50px;height:20px;line-height:24px">69.7</span>
<span class="c" style="left:185px;top:307px;width:50px;height:20px;line-height:24px">72.0</span>
<span class="c" style="left:236px;top:307px;width:50px;height:20px;line-height:24px">78.4</span>
<span class="c" style="left:287px;top:307px;width:50px;height:20px;line-height:24px">87.1</span>
<span class="c" style="left:338px;top:307px;width:50px;height:20px;line-height:24px">88.2</span>
<span class="c" style="left:389px;top:307px;width:50px;height:20px;line-height:24px">89.2</span>
<span class="c" style="left:440px;top:307px;width:50px;height:20px;line-height:24px">90.3</span>
<span class="c" style="left:491px;top:307px;width:50px;height:20px;line-height:24px">91.4</span>
<span class="c" style="left:542px;top:307px;width:50px;height:20px;line-height:24px">92.4</span>
<span class="c" style="left:593px;top:307px;width:50px;height:20px;line-height:24px">93.5</span>
<span class="c" style="left:644px;top:307px;width:50px;height:20px;line-height:24px">94.6</span>
<span class="c" style="left:695px;top:307px;width:50px;height:20px;line-height:24px">95.6</span>
<span class="c" style="left:746px;top:307px;width:50px;height:20px;line-height:24px">96.7</span>
<div class="r" style="left:31px;top:328px;width:51px;height:20px;background:#808080;"></div>
<span class="c h" style="left:31px;top:328px;width:51px;height:20px;line-height:24px;letter-spacing:0.35px;text-indent:0.35px">110.0</span>
<span class="c" style="left:83px;top:328px;width:50px;height:20px;line-height:24px">67.1</span>
<span class="c" style="left:134px;top:328px;width:50px;height:20px;line-height:24px">67.1</span>
<span class="c" style="left:185px;top:328px;width:50px;height:20px;line-height:24px">68.4</span>
<span class="c" style="left:236px;top:328px;width:50px;height:20px;line-height:24px">72.6</span>
<span class="c" style="left:287px;top:328px;width:50px;height:20px;line-height:24px">83.7</span>
<span class="c" style="left:338px;top:328px;width:50px;height:20px;line-height:24px">87.4</span>
<span class="c" style="left:389px;top:328px;width:50px;height:20px;line-height:24px">88.4</span>
<span class="c" style="left:440px;top:328px;width:50px;height:20px;line-height:24px">89.3</span>
<span class="c" style="left:491px;top:328px;width:50px;height:20px;line-height:24px">90.3</span>
<span class="c" style="left:542px;top:328px;width:50px;height:20px;line-height:24px">91.2</span>
<span class="c" style="left:593px;top:328px;width:50px;height:20px;line-height:24px">92.0</span>
<span class="c" style="left:644px;top:328px;width:50px;height:20px;line-height:24px">92.9</span>
<span class="c" style="left:695px;top:328px;width:50px;height:20px;line-height:24px">93.7</span>
<span class="c" style="left:746px;top:328px;width:50px;height:20px;line-height:24px">94.6</span>
<div class="r" style="left:31px;top:349px;width:51px;height:20px;background:#808080;"></div>
<span class="c h" style="left:31px;top:349px;width:51px;height:20px;line-height:24px;letter-spacing:0.35px;text-indent:0.35px">100.0</span>
<span class="c" style="left:83px;top:349px;width:50px;height:20px;line-height:24px">63.9</span>
<span class="c" style="left:134px;top:349px;width:50px;height:20px;line-height:24px">64.4</span>
<span class="c" style="left:185px;top:349px;width:50px;height:20px;line-height:24px">64.8</span>
<span class="c" style="left:236px;top:349px;width:50px;height:20px;line-height:24px">68.4</span>
<span class="c" style="left:287px;top:349px;width:50px;height:20px;line-height:24px">76.7</span>
<span class="c" style="left:338px;top:349px;width:50px;height:20px;line-height:24px">78.6</span>
<span class="c" style="left:389px;top:349px;width:50px;height:20px;line-height:24px">80.5</span>
<span class="c" style="left:440px;top:349px;width:50px;height:20px;line-height:24px">81.7</span>
<span class="c" style="left:491px;top:349px;width:50px;height:20px;line-height:24px">83.7</span>
<span class="c" style="left:542px;top:349px;width:50px;height:20px;line-height:24px">85.5</span>
<span class="c" style="left:593px;top:349px;width:50px;height:20px;line-height:24px">87.3</span>
<span class="c" style="left:644px;top:349px;width:50px;height:20px;line-height:24px">89.0</span>
<span class="c" style="left:695px;top:349px;width:50px;height:20px;line-height:24px">90.8</span>
<span class="c" style="left:746px;top:349px;width:50px;height:20px;line-height:24px">92.6</span>
<div class="r" style="left:31px;top:370px;width:51px;height:20px;background:#808080;"></div>
<span class="c h" style="left:31px;top:370px;width:51px;height:20px;line-height:24px;letter-spacing:0.35px;text-indent:0.35px">90.0</span>
<span class="c" style="left:83px;top:370px;width:50px;height:20px;line-height:24px">57.3</span>
<span class="c" style="left:134px;top:370px;width:50px;height:20px;line-height:24px">59.8</span>
<span class="c" style="left:185px;top:370px;width:50px;height:20px;line-height:24px">62.3</span>
<span class="c" style="left:236px;top:370px;width:50px;height:20px;line-height:24px">65.1</span>
<span class="c" style="left:287px;top:370px;width:50px;height:20px;line-height:24px">71.7</span>
<span class="c" style="left:338px;top:370px;width:50px;height:20px;line-height:24px">73.7</span>
<span class="c" style="left:389px;top:370px;width:50px;height:20px;line-height:24px">75.3</span>
<span class="c" style="left:440px;top:370px;width:50px;height:20px;line-height:24px">76.9</span>
<span class="c" style="left:491px;top:370px;width:50px;height:20px;line-height:24px">78.6</span>
<span class="c" style="left:542px;top:370px;width:50px;height:20px;line-height:24px">80.7</span>
<span class="c" style="left:593px;top:370px;width:50px;height:20px;line-height:24px">82.8</span>
<span class="c" style="left:644px;top:370px;width:50px;height:20px;line-height:24px">85.0</span>
<span class="c" style="left:695px;top:370px;width:50px;height:20px;line-height:24px">87.1</span>
<span class="c" style="left:746px;top:370px;width:50px;height:20px;line-height:24px">89.2</span>
<div class="r" style="left:31px;top:391px;width:51px;height:20px;background:#808080;"></div>
<span class="c h" style="left:31px;top:391px;width:51px;height:20px;line-height:24px;letter-spacing:0.35px;text-indent:0.35px">80.0</span>
<span class="c" style="left:83px;top:391px;width:50px;height:20px;line-height:24px">54.3</span>
<span class="c" style="left:134px;top:391px;width:50px;height:20px;line-height:24px">54.9</span>
<span class="c" style="left:185px;top:391px;width:50px;height:20px;line-height:24px">55.7</span>
<span class="c" style="left:236px;top:391px;width:50px;height:20px;line-height:24px">60.4</span>
<span class="c" style="left:287px;top:391px;width:50px;height:20px;line-height:24px">68.3</span>
<span class="c" style="left:338px;top:391px;width:50px;height:20px;line-height:24px">71.0</span>
<span class="c" style="left:389px;top:391px;width:50px;height:20px;line-height:24px">72.5</span>
<span class="c" style="left:440px;top:391px;width:50px;height:20px;line-height:24px">72.9</span>
<span class="c" style="left:491px;top:391px;width:50px;height:20px;line-height:24px">74.3</span>
<span class="c" style="left:542px;top:391px;width:50px;height:20px;line-height:24px">76.5</span>
<span class="c" style="left:593px;top:391px;width:50px;height:20px;line-height:24px">78.6</span>
<span class="c" style="left:644px;top:391px;width:50px;height:20px;line-height:24px">80.8</span>
<span class="c" style="left:695px;top:391px;width:50px;height:20px;line-height:24px">82.9</span>
<span class="c" style="left:746px;top:391px;width:50px;height:20px;line-height:24px">85.1</span>
<div class="r" style="left:31px;top:412px;width:51px;height:20px;background:#808080;"></div>
<span class="c h" style="left:31px;top:412px;width:51px;height:20px;line-height:24px;letter-spacing:0.35px;text-indent:0.35px">70.0</span>
<span class="c" style="left:83px;top:412px;width:50px;height:20px;line-height:24px">51.6</span>
<span class="c" style="left:134px;top:412px;width:50px;height:20px;line-height:24px">52.7</span>
<span class="c" style="left:185px;top:412px;width:50px;height:20px;line-height:24px">53.8</span>
<span class="c" style="left:236px;top:412px;width:50px;height:20px;line-height:24px">55.9</span>
<span class="c" style="left:287px;top:412px;width:50px;height:20px;line-height:24px">65.5</span>
<span class="c" style="left:338px;top:412px;width:50px;height:20px;line-height:24px">67.1</span>
<span class="c" style="left:389px;top:412px;width:50px;height:20px;line-height:24px">69.0</span>
<span class="c" style="left:440px;top:412px;width:50px;height:20px;line-height:24px">70.3</span>
<span class="c" style="left:491px;top:412px;width:50px;height:20px;line-height:24px">71.7</span>
<span class="c" style="left:542px;top:412px;width:50px;height:20px;line-height:24px">73.0</span>
<span class="c" style="left:593px;top:412px;width:50px;height:20px;line-height:24px">74.3</span>
<span class="c" style="left:644px;top:412px;width:50px;height:20px;line-height:24px">75.7</span>
<span class="c" style="left:695px;top:412px;width:50px;height:20px;line-height:24px">77.0</span>
<span class="c" style="left:746px;top:412px;width:50px;height:20px;line-height:24px">78.3</span>
</div>
<div class="r" style="left:756px;top:117px;width:17px;height:320px;background:#f0f0f0;"></div>
<div class="r" style="left:757px;top:135px;width:15px;height:17px;background:#cdcdcd;"></div>
<svg style="position:absolute;left:759px;top:121px" width="11" height="11" viewBox="0 0 11 11"><path d="M2.3 8.3 L5.6 5 L8.9 8.3" fill="none" stroke="#5a5a5a" stroke-width="2"/></svg>
<div class="menu" id="menu1" style="left:307px;top:53px;width:219px;height:272px"></div>
<div class="r" style="left:308px;top:54px;width:17px;height:270px;background:#3f3f3f;"></div>
<span id="a1" class="t" style="left:334.30px;top:57.1px;height:19px;line-height:19px;font-size:13px;color:#b4b4b4;font-weight:normal;font-style:normal;letter-spacing:0.158px;"><u>M</u>otorsport Functions Setup</span>
<div class="r" style="left:327px;top:79px;width:195px;height:1px;background:#5a5a5a;"></div>
<span id="a2" class="t" style="left:335.30px;top:83.1px;height:19px;line-height:19px;font-size:13px;color:#b4b4b4;font-weight:normal;font-style:normal;letter-spacing:-0.021px;"><u>O</u>verrun Boost (Anti-Lag)</span>
<svg style="position:absolute;left:515px;top:89px" width="4" height="7" viewBox="0 0 4 7"><path d="M0 0 L4 3.5 L0 7 Z" fill="#000"/></svg>
<div class="r" style="left:327px;top:105px;width:195px;height:1px;background:#5a5a5a;"></div>
<div class="r" style="left:310px;top:108px;width:213px;height:21px;background:#a9cdf3;"></div>
<span id="a3" class="t" style="left:335.30px;top:109.8px;height:18px;line-height:18px;font-size:12px;color:#000000;font-weight:normal;font-style:normal;letter-spacing:-0.178px;"><u>L</u>aunch Control (RPM)</span>
<svg style="position:absolute;left:515px;top:115px" width="4" height="7" viewBox="0 0 4 7"><path d="M0 0 L4 3.5 L0 7 Z" fill="#000"/></svg>
<span id="a4" class="t" style="left:334.30px;top:132.1px;height:19px;line-height:19px;font-size:13px;color:#b4b4b4;font-weight:normal;font-style:normal;letter-spacing:-0.016px;"><u>R</u>olling Launch Control</span>
<svg style="position:absolute;left:515px;top:138px" width="4" height="7" viewBox="0 0 4 7"><path d="M0 0 L4 3.5 L0 7 Z" fill="#000"/></svg>
<div class="r" style="left:327px;top:154px;width:195px;height:1px;background:#5a5a5a;"></div>
<span id="a5" class="t" style="left:334.30px;top:158.1px;height:19px;line-height:19px;font-size:13px;color:#b4b4b4;font-weight:normal;font-style:normal;letter-spacing:0.151px;"><u>D</u>ifferential Control</span>
<svg style="position:absolute;left:515px;top:164px" width="4" height="7" viewBox="0 0 4 7"><path d="M0 0 L4 3.5 L0 7 Z" fill="#000"/></svg>
<div class="r" style="left:327px;top:180px;width:195px;height:1px;background:#5a5a5a;"></div>
<span id="a6" class="t" style="left:335.30px;top:184.1px;height:19px;line-height:19px;font-size:13px;color:#b4b4b4;font-weight:normal;font-style:normal;letter-spacing:-0.078px;"><u>G</u>ear Cut Control</span>
<svg style="position:absolute;left:515px;top:190px" width="4" height="7" viewBox="0 0 4 7"><path d="M0 0 L4 3.5 L0 7 Z" fill="#000"/></svg>
<span id="a7" class="t" style="left:335.30px;top:207.1px;height:19px;line-height:19px;font-size:13px;color:#b4b4b4;font-weight:normal;font-style:normal;letter-spacing:0.008px;">G<u>e</u>arshift Control</span>
<svg style="position:absolute;left:515px;top:213px" width="4" height="7" viewBox="0 0 4 7"><path d="M0 0 L4 3.5 L0 7 Z" fill="#000"/></svg>
<div class="r" style="left:327px;top:229px;width:195px;height:1px;background:#5a5a5a;"></div>
<span id="a8" class="t" style="left:335.30px;top:233.1px;height:19px;line-height:19px;font-size:13px;color:#b4b4b4;font-weight:normal;font-style:normal;letter-spacing:0.086px;"><u>T</u>raction Control</span>
<svg style="position:absolute;left:515px;top:239px" width="4" height="7" viewBox="0 0 4 7"><path d="M0 0 L4 3.5 L0 7 Z" fill="#000"/></svg>
<span id="a9" class="t" style="left:335.30px;top:256.1px;height:19px;line-height:19px;font-size:13px;color:#b4b4b4;font-weight:normal;font-style:normal;letter-spacing:-0.021px;">Tr<u>a</u>nsmission Brake Control</span>
<svg style="position:absolute;left:515px;top:262px" width="4" height="7" viewBox="0 0 4 7"><path d="M0 0 L4 3.5 L0 7 Z" fill="#000"/></svg>
<span id="a10" class="t" style="left:335.30px;top:279.1px;height:19px;line-height:19px;font-size:13px;color:#b4b4b4;font-weight:normal;font-style:normal;letter-spacing:-0.016px;"><u>W</u>ater Spray</span>
<svg style="position:absolute;left:515px;top:285px" width="4" height="7" viewBox="0 0 4 7"><path d="M0 0 L4 3.5 L0 7 Z" fill="#000"/></svg>
<span id="a11" class="t" style="left:334.30px;top:302.1px;height:19px;line-height:19px;font-size:13px;color:#b4b4b4;font-weight:normal;font-style:normal;letter-spacing:0.249px;"><u>N</u>itrous Control</span>
<svg style="position:absolute;left:515px;top:308px" width="4" height="7" viewBox="0 0 4 7"><path d="M0 0 L4 3.5 L0 7 Z" fill="#000"/></svg>
<div class="menu" id="menu2" style="left:525px;top:105px;width:216px;height:318px"></div>
<div class="r" style="left:526px;top:106px;width:17px;height:316px;background:#3f3f3f;"></div>
<span id="b1" class="t" style="left:552.30px;top:109.1px;height:19px;line-height:19px;font-size:13px;color:#ffffff;font-weight:normal;font-style:normal;letter-spacing:-0.165px;"><u>L</u>aunch Control(RPM) Setup</span>
<div class="r" style="left:545px;top:131px;width:192px;height:1px;background:#5a5a5a;"></div>
<span id="b2" class="t" style="left:552.30px;top:135.1px;height:19px;line-height:19px;font-size:13px;color:#ffffff;font-weight:normal;font-style:normal;letter-spacing:-0.126px;">L<u>a</u>unch Arming</span>
<span id="b3" class="t" style="left:552.30px;top:158.1px;height:19px;line-height:19px;font-size:13px;color:#ffffff;font-weight:normal;font-style:normal;letter-spacing:-0.103px;">La<u>u</u>nch Disarming</span>
<div class="r" style="left:545px;top:180px;width:192px;height:1px;background:#5a5a5a;"></div>
<span id="b4" class="t" style="left:552.30px;top:184.1px;height:19px;line-height:19px;font-size:13px;color:#ffffff;font-weight:normal;font-style:normal;letter-spacing:-0.089px;">Lau<u>n</u>ch RPM Target 1</span>
<div class="r" style="left:528px;top:206px;width:210.5px;height:21px;background:#a9cdf3;"></div>
<span id="b5" class="t" style="left:552.30px;top:208.0px;height:18px;line-height:18px;font-size:12.5px;color:#000000;font-weight:normal;font-style:normal;letter-spacing:-0.211px;">Laun<u>c</u>h Ignition Offset 1</span>
<span id="b6" class="t" style="left:552.30px;top:230.1px;height:19px;line-height:19px;font-size:13px;color:#ffffff;font-weight:normal;font-style:normal;letter-spacing:-0.289px;">Launc<u>h</u> Fuel Enrich/Enlean 1</span>
<div class="r" style="left:545px;top:252px;width:192px;height:1px;background:#5a5a5a;"></div>
<span id="b7" class="t" style="left:552.30px;top:256.1px;height:19px;line-height:19px;font-size:13px;color:#949494;font-weight:normal;font-style:normal;letter-spacing:-0.067px;">Launch <u>R</u>PM Target 2</span>
<span id="b8" class="t" style="left:552.30px;top:279.1px;height:19px;line-height:19px;font-size:13px;color:#949494;font-weight:normal;font-style:normal;letter-spacing:-0.006px;">Launch <u>I</u>gnition Offset 2</span>
<span id="b9" class="t" style="left:552.30px;top:302.1px;height:19px;line-height:19px;font-size:13px;color:#949494;font-weight:normal;font-style:normal;letter-spacing:-0.247px;">Launch <u>F</u>uel Enrich/Enlean 2</span>
<div class="r" style="left:545px;top:324px;width:192px;height:1px;background:#5a5a5a;"></div>
<span id="b10" class="t" style="left:552.30px;top:328.1px;height:19px;line-height:19px;font-size:13px;color:#949494;font-weight:normal;font-style:normal;letter-spacing:-0.089px;">Launch R<u>P</u>M Target 3</span>
<span id="b11" class="t" style="left:552.30px;top:351.1px;height:19px;line-height:19px;font-size:13px;color:#949494;font-weight:normal;font-style:normal;letter-spacing:-0.006px;">Launch I<u>g</u>nition Offset 3</span>
<span id="b12" class="t" style="left:552.30px;top:374.1px;height:19px;line-height:19px;font-size:13px;color:#949494;font-weight:normal;font-style:normal;letter-spacing:-0.247px;">Launch Fu<u>e</u>l Enrich/Enlean 3</span>
<div class="r" style="left:545px;top:396px;width:192px;height:1px;background:#5a5a5a;"></div>
<span id="b13" class="t" style="left:552.30px;top:400.1px;height:19px;line-height:19px;font-size:13px;color:#ffffff;font-weight:normal;font-style:normal;letter-spacing:0.017px;">Launch <u>T</u>able Control</span>
</body></html>
